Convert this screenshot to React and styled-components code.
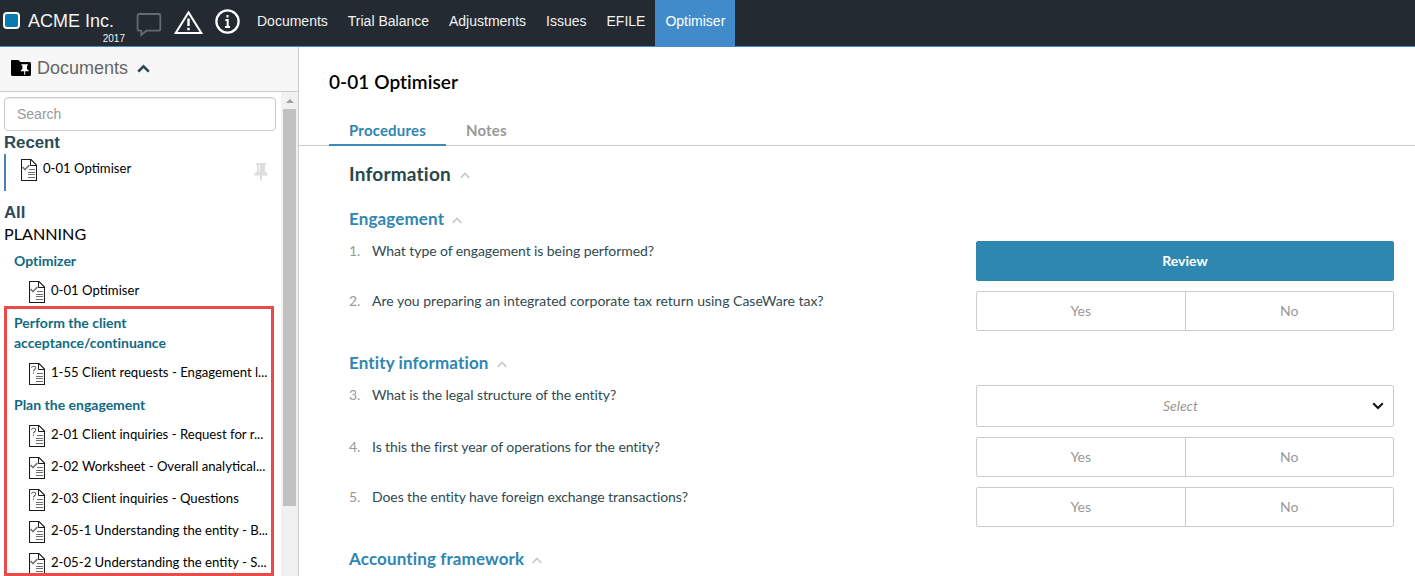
import React from "react";
import styled, { createGlobalStyle, css } from "styled-components";

const GlobalStyle = createGlobalStyle`
  *, *::before, *::after { box-sizing: border-box; }
  html, body { margin: 0; padding: 0; background: #fff; overflow: hidden; }
  body { font-family: Lato, sans-serif; font-size: 14px; color: #000; }
`;

const sans = css`font-family: "Liberation Sans", Arial, sans-serif;`;

const Page = styled.div`
  display: flex;
  flex-direction: column;
  width: 1415px;
  height: 576px;
  overflow: hidden;
`;

const Header = styled.header`
  ${sans}
  display: flex;
  flex: none;
  height: 47px;
  background: #232a31;
  border-bottom: 1px solid #428bca;
  color: #f2f2f2;
`;

const Brand = styled.div`
  display: flex;
  width: 136px;
  padding: 12px 0 0 3px;
  gap: 8px;
`;

const BrandMark = styled.span`
  width: 17px;
  height: 17px;
  border: 2px solid #fff;
  border-radius: 4px;
  background: #0a7bb0;
`;

const BrandText = styled.div`
  width: 97px;
  display: flex;
  flex-direction: column;
  margin-top: -2px;
`;

const BrandName = styled.span`
  font-size: 18px;
  line-height: 22px;
`;

const BrandYear = styled.span`
  font-size: 10px;
  line-height: 14px;
  align-self: flex-end;
`;

const HeaderIcons = styled.div`
  display: flex;
  width: 111px;
  height: 46px;
  svg { display: block; }
`;

const NavItem = styled.a`
  height: 46px;
  padding: 0 10px;
  font-size: 14px;
  line-height: 42px;
  color: ${(p) => (p.$active ? "#fff" : "#f2f2f2")};
  background: ${(p) => (p.$active ? "#428bca" : "transparent")};
`;

const Body = styled.div`
  display: flex;
  flex: 1;
  min-height: 0;
`;

const Sidebar = styled.aside`
  position: relative;
  display: flex;
  flex-direction: column;
  width: 299px;
  flex: none;
  border-right: 1px solid #ccc;
`;

const SidebarHeader = styled.div`
  ${sans}
  display: flex;
  flex: none;
  align-items: center;
  height: 45px;
  padding: 0 0 2px 11px;
  background: #f7f7f7;
  border-bottom: 1px solid #ccc;
  font-size: 18px;
  color: #666;
`;

const SidebarTitle = styled.span`
  margin: 0 9px 0 6px;
`;

const SidebarBody = styled.div`
  display: flex;
  flex: 1;
  min-height: 0;
`;

const DocumentList = styled.div`
  width: 281px;
  padding: 5px 5px 0 4px;
  overflow: hidden;
`;

const Search = styled.input`
  ${sans}
  display: block;
  width: 272px;
  height: 34px;
  padding: 0 12px;
  border: 1px solid #ccc;
  border-radius: 4px;
  outline: none;
  font-size: 14px;
  box-shadow: inset 0 1px 1px rgba(0, 0, 0, 0.075);
  &::placeholder { color: #999; opacity: 1; }
`;

const ListTitle = styled.h2`
  ${sans}
  margin: 0;
  font-size: 16.8px;
  line-height: 23px;
  font-weight: 700;
  color: #2a4b54;
`;

const RecentItem = styled.div`
  display: flex;
  height: 37px;
  margin-bottom: 10px;
  padding: 5px 8px 0 15px;
  border-left: 2px solid #4682b4;
`;

const ItemLabel = styled.span`
  flex: 1;
  min-width: 0;
  margin: -1px 0 0 6px;
  font-size: 13.15px;
  line-height: 20px;
  white-space: nowrap;
`;

const PinSlot = styled.span`
  margin-top: 4px;
`;

const Phase = styled.div`
  padding-bottom: 2px;
  font-size: 16.15px;
  line-height: 19px;
`;

const GroupTitle = styled.div`
  width: 200px;
  margin: 6px 0 4px 10px;
  font-size: 14px;
  line-height: 20px;
  font-weight: 700;
  font-variant-ligatures: none;
  color: #0f6a82;
`;

const DocItem = styled.div`
  display: flex;
  height: 32px;
  padding: 6px 0 0 25px;
`;

const Scrollbar = styled.div`
  display: flex;
  flex-direction: column;
  align-items: center;
  width: 17px;
  background: #f1f1f1;
`;

const ScrollArrow = styled.span`
  margin: 7px 0 6px;
  border: 4px solid transparent;
  border-top: 0;
  border-bottom: 4px solid #a0a0a0;
`;

const ScrollThumb = styled.span`
  width: 13px;
  height: 397px;
  background: #c1c1c1;
`;

const Highlight = styled.div`
  position: absolute;
  left: 4px;
  top: 259px;
  width: 270px;
  height: 270px;
  border: 3px solid #ea4b46;
`;

const Main = styled.main`
  flex: 1;
  min-width: 0;
  font-variant-ligatures: none;
`;

const Title = styled.h1`
  margin: 0;
  padding: 23px 30px 0;
  height: 69px;
  font-size: 19px;
  line-height: 24px;
  font-weight: 600;
  letter-spacing: 0.07px;
`;

const Tabs = styled.div`
  display: flex;
  height: 30px;
  padding-left: 30px;
  box-shadow: inset 0 -1px #ccc;
`;

const Tab = styled.a`
  padding: 0 20px;
  font-size: 15px;
  line-height: 29px;
  font-weight: 700;
  letter-spacing: 0.17px;
  color: ${(p) => (p.$active ? "#2f86b1" : "#999")};
  border-bottom: 2px solid ${(p) => (p.$active ? "#4088b6" : "transparent")};
`;

const Content = styled.div`
  padding: 17px 21px 0 50px;
`;

const SectionTitle = styled.h2`
  display: flex;
  align-items: center;
  gap: 9px;
  margin: 0 0 25px;
  height: 20px;
  font-size: 19px;
  font-weight: 700;
  letter-spacing: 0.22px;
  color: #29464b;
`;

const QuestionGroup = styled.section`
  margin-bottom: 21px;
`;

const GroupHeading = styled.h3`
  display: flex;
  align-items: center;
  gap: 8px;
  margin: 0 0 13px;
  height: 20px;
  font-size: 17px;
  font-weight: 700;
  letter-spacing: 0.13px;
  color: #2f86b1;
`;

const ChevronSlot = styled.span`
  display: flex;
  margin-top: 4px;
`;

const Question = styled.div`
  display: flex;
  margin-bottom: 10px;
  line-height: 20px;
`;

const Num = styled.span`
  width: 23px;
  color: #999;
`;

const QuestionText = styled.span`
  flex: 1;
  letter-spacing: ${(p) => (p.$long ? 0 : "-0.08px")};
  color: #304a50;
`;

const Answer = styled.div`
  display: flex;
  width: 418px;
  height: ${(p) => (p.$tall ? 42 : 40)}px;
  border: 1px solid ${(p) => (p.$filled ? "#2e87b0" : "#ccc")};
  border-radius: 2px;
  background: ${(p) => (p.$filled ? "#2e87b0" : "#fff")};
`;

const Option = styled.span`
  display: flex;
  flex: 1;
  align-items: center;
  justify-content: center;
  color: ${(p) => (p.$selected ? "#fff" : "#999")};
  font-weight: ${(p) => (p.$selected ? 700 : 400)};
  & + & { border-left: 1px solid #ccc; }
`;

const SelectValue = styled.span`
  flex: 1;
  padding-left: 12px;
  text-align: center;
  line-height: 40px;
  font-style: italic;
  color: #999;
`;

const SelectArrow = styled.span`
  display: flex;
  align-items: center;
  margin-right: 9px;
`;

const DocSvg = styled.svg`
  flex: none;
`;

const DocIcon = ({ kind }) => (
  <DocSvg width="16" height="22" viewBox="0 0 16 22" fill="none">
    <path d="M.5.5H10L15.5 6V21.5H.5Z" stroke="#1c1c1c" strokeWidth="1.1" />
    <path d="M9.5.5V6.5H15.5" stroke="#1c1c1c" />
    <path d="M8 10.5H14M7 13.5H14M7 15.5H14M7 18.5H14" stroke="#6e6e6e" />
    {kind === "check" ? (
      <path d="M1.5 8L4 10.5L8.5 6" stroke="#777" strokeWidth="1.7" />
    ) : (
      <path d="M2.5 4.8C2.7 2.8 6.8 2.6 6.7 5C6.6 6.5 4.6 6.6 4.5 8.4M4.5 9.5V10.8" stroke="#666" strokeWidth="1.1" />
    )}
  </DocSvg>
);

const Chevron = () => (
  <svg width="10" height="7" viewBox="0 0 10 7" fill="none">
    <path d="M.7 6L5 1.5L9.3 6" stroke="#c8c8c8" strokeWidth="1.7" />
  </svg>
);

const ToolIcons = () => (
  <svg width="111" height="46" viewBox="136 0 111 46" fill="none">
    <path d="M139 14H159Q160.3 14 160.3 15.5V29Q160.3 30.7 158.8 30.7H146.2L141.3 35V30.7H139.2Q137.6 30.7 137.6 29V15.5Q137.6 14 139 14Z" stroke="#656a6f" strokeWidth="1.8" />
    <path d="M188.5 12.4L201.3 33H175.7Z" stroke="#fff" strokeWidth="2" />
    <path d="M188.5 18.5V26M188.5 27.7V30.2" stroke="#fff" strokeWidth="2.4" />
    <circle cx="227.5" cy="21.5" r="11.1" stroke="#fff" strokeWidth="2.3" />
    <path d="M227.5 15V17.6M225.3 20H227.7V27M225 27H230" stroke="#fff" strokeWidth="2" />
  </svg>
);

const FolderIcon = () => (
  <svg width="20" height="16" viewBox="0 0 20 16">
    <path d="M1 0H7.5L9.5 2H18.5Q20 2 20 3.5V14.5Q20 16 18.5 16H1.5Q0 16 0 14.5V1Q0 0 1 0Z" fill="#000" />
    <path d="M10.5 4.2H16.8V5.4H16V9L17.8 10.7V11.3H14.2V14.8H13.2V11.3H9.6V10.7L11.4 9V5.4H10.5Z" fill="#fff" />
  </svg>
);

const PinIcon = () => (
  <svg width="14" height="18" viewBox="0 0 14 18">
    <path d="M2 0H12V2H11V8L13.7 11V12.4H8V17.5H6V12.4H.3V11L3 8V2H2Z" fill="#dedede" />
    <path d="M5.3 2V8.5" stroke="#f8f8f8" strokeWidth="1.2" />
  </svg>
);

const navigation = ["Documents", "Trial Balance", "Adjustments", "Issues", "EFILE", "Optimiser"];

const documentGroups = [
  { title: "Optimizer", items: [["check", "0-01 Optimiser"]] },
  {
    title: "Perform the client acceptance/continuance",
    items: [["query", "1-55 Client requests - Engagement l..."]],
  },
  {
    title: "Plan the engagement",
    items: [
      ["query", "2-01 Client inquiries - Request for r..."],
      ["check", "2-02 Worksheet - Overall analytical..."],
      ["query", "2-03 Client inquiries - Questions"],
      ["check", "2-05-1 Understanding the entity - B..."],
      ["check", "2-05-2 Understanding the entity - S..."],
    ],
  },
];

const questionGroups = [
  {
    title: "Engagement",
    questions: [
      ["1.", "What type of engagement is being performed?", "review"],
      ["2.", "Are you preparing an integrated corporate tax return using CaseWare tax?", "yesno"],
    ],
  },
  {
    title: "Entity information",
    questions: [
      ["3.", "What is the legal structure of the entity?", "select"],
      ["4.", "Is this the first year of operations for the entity?", "yesno"],
      ["5.", "Does the entity have foreign exchange transactions?", "yesno"],
    ],
  },
  { title: "Accounting framework", questions: [] },
];

function AnswerControl({ kind }) {
  if (kind === "review") {
    return <Answer $filled><Option $selected>Review</Option></Answer>;
  }
  if (kind === "select") {
    return (
      <Answer $tall>
        <SelectValue>Select</SelectValue>
        <SelectArrow>
          <svg width="12" height="8" viewBox="0 0 12 8" fill="none">
            <path d="M1.2 1.2L6 6L10.8 1.2" stroke="#111" strokeWidth="2" />
          </svg>
        </SelectArrow>
      </Answer>
    );
  }
  return <Answer><Option>Yes</Option><Option>No</Option></Answer>;
}

export default function App() {
  return (
    <Page>
      <GlobalStyle />
      <Header>
        <Brand>
          <BrandMark />
          <BrandText>
            <BrandName>ACME Inc.</BrandName>
            <BrandYear>2017</BrandYear>
          </BrandText>
        </Brand>
        <HeaderIcons><ToolIcons /></HeaderIcons>
        {navigation.map((n) => <NavItem key={n} $active={n === "Optimiser"}>{n}</NavItem>)}
      </Header>
      <Body>
        <Sidebar>
          <SidebarHeader>
            <FolderIcon />
            <SidebarTitle>Documents</SidebarTitle>
            <svg width="13" height="9" viewBox="0 0 13 9" fill="none">
              <path d="M1.2 7.6L6.5 2.4L11.8 7.6" stroke="#29464b" strokeWidth="2.6" />
            </svg>
          </SidebarHeader>
          <SidebarBody>
            <DocumentList>
              <Search placeholder="Search" />
              <ListTitle>Recent</ListTitle>
              <RecentItem>
                <DocIcon kind="check" />
                <ItemLabel>0-01 Optimiser</ItemLabel>
                <PinSlot><PinIcon /></PinSlot>
              </RecentItem>
              <ListTitle>All</ListTitle>
              <Phase>PLANNING</Phase>
              {documentGroups.map((g) => (
                <React.Fragment key={g.title}>
                  <GroupTitle>{g.title}</GroupTitle>
                  {g.items.map(([kind, label]) => (
                    <DocItem key={label}>
                      <DocIcon kind={kind} />
                      <ItemLabel>{label}</ItemLabel>
                    </DocItem>
                  ))}
                </React.Fragment>
              ))}
            </DocumentList>
            <Scrollbar><ScrollArrow /><ScrollThumb /></Scrollbar>
          </SidebarBody>
          <Highlight />
        </Sidebar>
        <Main>
          <Title>0-01 Optimiser</Title>
          <Tabs>
            <Tab $active>Procedures</Tab>
            <Tab>Notes</Tab>
          </Tabs>
          <Content>
            <SectionTitle>Information<ChevronSlot><Chevron /></ChevronSlot></SectionTitle>
            {questionGroups.map((g) => (
              <QuestionGroup key={g.title}>
                <GroupHeading>{g.title}<ChevronSlot><Chevron /></ChevronSlot></GroupHeading>
                {g.questions.map(([num, text, kind]) => (
                  <Question key={num}>
                    <Num>{num}</Num>
                    <QuestionText $long={text.length > 60}>{text}</QuestionText>
                    <AnswerControl kind={kind} />
                  </Question>
                ))}
              </QuestionGroup>
            ))}
          </Content>
        </Main>
      </Body>
    </Page>
  );
}
